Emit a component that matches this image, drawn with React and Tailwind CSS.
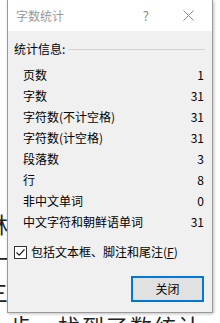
const rows = [
  ["页数", "1"],
  ["字数", "31"],
  ["字符数(不计空格)", "31"],
  ["字符数(计空格)", "31"],
  ["段落数", "3"],
  ["行", "8"],
  ["非中文单词", "0"],
  ["中文字符和朝鲜语单词", "31"],
];

const docLines = [
  "林中的统计字数",
  "一步，打开审阅项",
  "三击，选择字数计",
  "一步，找到了数统计",
];

export default function App() {
  return (
    <div
      className="relative w-[220px] h-[323px] overflow-hidden bg-white text-black"
      style={{ fontFamily: '"Noto Sans CJK SC", "Noto Sans", sans-serif' }}
    >
      {/* document behind the dialog */}
      <div className="pt-[206px] -ml-[14px] text-[22px] leading-[34px] text-[#222] whitespace-nowrap tracking-[2px]">
        {docLines.map((l) => (
          <div key={l}>{l}</div>
        ))}
      </div>

      {/* dialog */}
      <div className="absolute left-[7px] top-0 w-[206px] h-[313px] flex flex-col border border-[#9a9a9a] border-t-0 shadow-[1px_1px_3px_rgba(0,0,0,0.25)] bg-[#f0f0f0]">
        <div className="h-[31px] shrink-0 bg-white flex items-center pl-[8px] text-[12px] text-[#999]">
          <span>字数统计</span>
          <span className="ml-auto mr-[34px] text-[13px] text-[#8a8a8a]">?</span>
          <svg width="11" height="11" viewBox="0 0 11 11" className="mr-[18px]">
            <path d="M0.5 0.5 L10.5 10.5 M10.5 0.5 L0.5 10.5" stroke="#8a8a8a" strokeWidth="1" />
          </svg>
        </div>

        <div className="flex-1 flex flex-col pl-[6px] pr-[7px] pt-[10px] text-[12px]">
          <div className="flex items-center h-[16px] leading-[16px]">
            <span>统计信息:</span>
            <div className="flex-1 ml-[3px] border-t border-[#d5d5d5]" />
          </div>

          <div className="mt-[7px] flex flex-col pl-[9px]">
            {rows.map(([k, v]) => (
              <div key={k} className="flex items-center justify-between h-[21px] pr-[1px]">
                <span>{k}</span>
                <span>{v}</span>
              </div>
            ))}
          </div>

          <div className="mt-[12px] flex items-center h-[16px]">
            <div className="w-[13px] h-[13px] border border-[#333] bg-white flex items-center justify-center">
              <svg width="11" height="11" viewBox="0 0 11 11">
                <path d="M1.5 5.5 L4.2 8.2 L9.5 2.5" fill="none" stroke="#222" strokeWidth="1.2" />
              </svg>
            </div>
            <span className="ml-[4px]">
              包括文本框、脚注和尾注(<span className="underline">F</span>)
            </span>
          </div>

          <div className="mt-[16px] flex justify-end pr-[1px]">
            <button
              type="button"
              className="w-[73px] h-[26px] border-2 border-[#0078d7] bg-[#e1e1e1] text-[12px] text-black flex items-center justify-center"
            >
              关闭
            </button>
          </div>
        </div>
      </div>
    </div>
  );
}
